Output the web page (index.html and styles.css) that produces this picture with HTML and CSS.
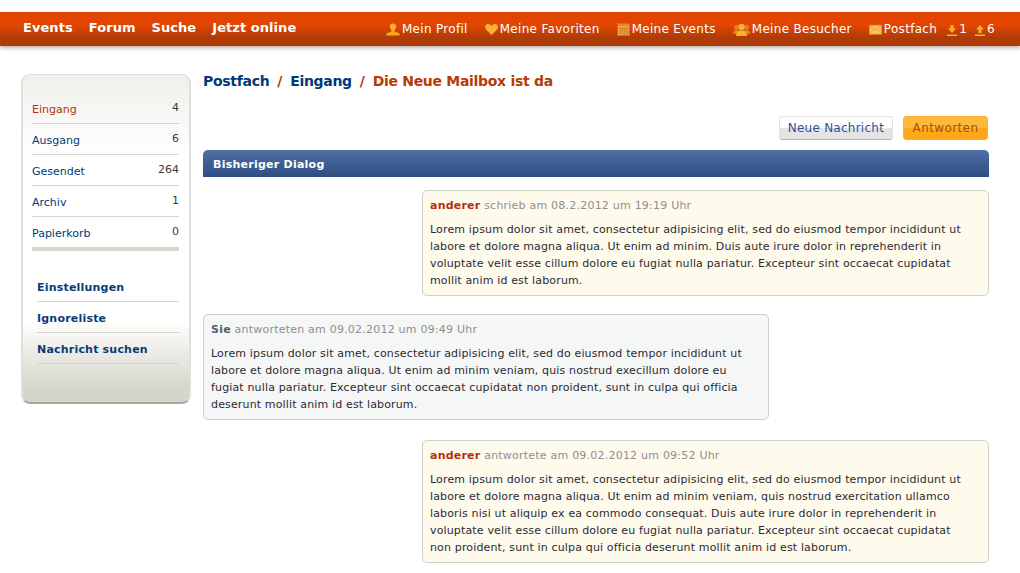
FILE: index.html
```html
<!DOCTYPE html>
<html lang="de">
<head>
    <meta charset="UTF-8">
    <title>Postfach - Die Neue Mailbox ist da</title>
    <link rel="stylesheet" href="styles.css">
</head>
<body>
    <div class="topbar">
        <div class="main-nav">
            <a>Events</a>
            <a>Forum</a>
            <a>Suche</a>
            <a>Jetzt online</a>
        </div>
        <div class="user-nav">
            <a><svg class="icon icon-profile" viewBox="0 0 14 14"><circle cx="7" cy="4" r="3.400" fill="#fbb034"/><path d="M5.500 6.500h3l.5 3 5 1.500v2.500H0V11l5-1.500z" fill="#f9a71f"/></svg>Mein Profil</a>
            <a><svg class="icon" viewBox="0 0 14 14"><path d="M7 13 1 7C-.5 5-.2 1.500 3 1.200 4.800 1 6.200 2 7 3.400 7.800 2 9.200 1 11 1.200 14.200 1.500 14.500 5 13 7z" fill="#fbb034"/></svg>Meine Favoriten</a>
            <a><svg class="icon" viewBox="0 0 14 14"><rect x=".5" y=".5" width="13" height="13" fill="#f9b04a" stroke="#c8701a"/><rect x="1" y="1" width="12" height="2.500" fill="#e8862a"/><path d="M1 6h12M1 8.500h12M1 11h12M3.500 4v9M6 4v9M8.500 4v9M11 4v9" stroke="#c8701a" stroke-width=".7"/></svg>Meine Events</a>
            <a><svg class="icon-people" viewBox="0 0 17 14"><circle cx="3.500" cy="4.500" r="2.400" fill="#d9861f"/><circle cx="13.500" cy="4.500" r="2.400" fill="#d9861f"/><path d="M0 11c0-2.500 1.200-4 3.500-4s3.500 1.500 3.500 4zM10 11c0-2.500 1.200-4 3.500-4s3.500 1.500 3.500 4z" fill="#d9861f"/><circle cx="8.500" cy="4" r="3.200" fill="#fbb034"/><path d="M3 13c0-3.500 2-5.500 5.500-5.500S14 9.500 14 13z" fill="#fbb034"/></svg>Meine Besucher</a>
            <a><svg class="icon" viewBox="0 0 14 14"><rect x=".5" y="2.500" width="13" height="9.500" fill="#fbc566" stroke="#e59a2c"/><path d="M1 3 7 7.500 13 3M1 11.500 5 6.500M13 11.500 9 6.500" fill="none" stroke="#e59a2c"/></svg>Postfach</a>
            <span class="counters">
                <a><svg class="icon-count" viewBox="0 0 10 11"><path d="M3.500 0h3v3.500H9L5 8 1 3.500h2.500zM0 9.500h10V11H0z" fill="#fbb034"/></svg>1</a>
                <a><svg class="icon-count" viewBox="0 0 10 11"><path d="M3.500 8h3V4.500H9L5 0 1 4.500h2.500zM0 9.500h10V11H0z" fill="#fbb034"/></svg>6</a>
            </span>
        </div>
    </div>

    <div class="page">
        <div class="sidebar">
            <ul class="folders">
                <li class="current"><a>Eingang</a><span>4</span></li>
                <li><a>Ausgang</a><span>6</span></li>
                <li><a>Gesendet</a><span>264</span></li>
                <li><a>Archiv</a><span>1</span></li>
                <li><a>Papierkorb</a><span>0</span></li>
            </ul>
            <ul class="tools">
                <li>Einstellungen</li>
                <li>Ignoreliste</li>
                <li>Nachricht suchen</li>
            </ul>
        </div>

        <div class="content">
            <h1 class="breadcrumb">
                <a>Postfach</a><i>/</i><a>Eingang</a><i>/</i><span>Die Neue Mailbox ist da</span>
            </h1>
            <div class="actions">
                <button class="btn btn-grey">Neue Nachricht</button>
                <button class="btn btn-orange">Antworten</button>
            </div>
            <div class="dialog-title">Bisheriger Dialog</div>

            <div class="message theirs first">
                <div class="meta"><b>anderer</b> schrieb am 08.2.2012 um 19:19 Uhr</div>
                <p>Lorem ipsum dolor sit amet, consectetur adipisicing elit, sed do eiusmod tempor incididunt ut labore et dolore magna aliqua. Ut enim ad minim. Duis aute irure dolor in reprehenderit in voluptate velit esse cillum dolore eu fugiat nulla pariatur. Excepteur sint occaecat cupidatat mollit anim id est laborum.</p>
            </div>
            <div class="message mine">
                <div class="meta"><b>Sie</b> antworteten am 09.02.2012 um 09:49 Uhr</div>
                <p>Lorem ipsum dolor sit amet, consectetur adipisicing elit, sed do eiusmod tempor incididunt ut labore et dolore magna aliqua. Ut enim ad minim veniam, quis nostrud execillum dolore eu fugiat nulla pariatur. Excepteur sint occaecat cupidatat non proident, sunt in culpa qui officia deserunt mollit anim id est laborum.</p>
            </div>
            <div class="message theirs">
                <div class="meta"><b>anderer</b> antwortete am 09.02.2012 um 09:52 Uhr</div>
                <p>Lorem ipsum dolor sit amet, consectetur adipisicing elit, sed do eiusmod tempor incididunt ut labore et dolore magna aliqua. Ut enim ad minim veniam, quis nostrud exercitation ullamco laboris nisi ut aliquip ex ea commodo consequat. Duis aute irure dolor in reprehenderit in voluptate velit esse cillum dolore eu fugiat nulla pariatur. Excepteur sint occaecat cupidatat non proident, sunt in culpa qui officia deserunt mollit anim id est laborum.</p>
            </div>
        </div>
    </div>
</body>
</html>
```

FILE: styles.css
```css
body {
    margin: 0;
    padding: 12px 0 0;
    background-color: #ffffff;
    color: #2b2b33;
    font-family: "DejaVu Sans", Verdana, sans-serif;
    font-size: 11px;
}
.topbar {
    display: flex;
    justify-content: space-between;
    height: 34px;
    padding: 0 25px 0 23px;
    background: linear-gradient(#e24500 0, #e24500 40%, #af3c06 75%, #af3c06 100%);
    box-shadow: 0 2px 4px rgba(90, 60, 40, 0.4);
    color: #ffffff;
}
.main-nav {
    display: flex;
    gap: 16px;
    padding-top: 8px;
    font-size: 13px;
    font-weight: bold;
    letter-spacing: 0.06px;
}
.user-nav {
    display: flex;
    gap: 17px;
    padding-top: 10px;
    font-size: 12px;
    letter-spacing: 0.3px;
}
.user-nav a {
    display: flex;
    align-items: flex-start;
}
.icon {
    width: 13px;
    height: 13px;
    margin: 1px 2px 0 0;
}
.icon-profile {
    width: 14px;
}
.icon-people {
    width: 17px;
    height: 14px;
    margin: 1px 2px 0 0;
}
.icon-count {
    width: 10px;
    height: 11px;
    margin: 3px 2px 0 0;
}
.counters {
    display: flex;
    gap: 8px;
    margin-left: -7px;
}
.page {
    display: flex;
    align-items: flex-start;
    gap: 12px;
    padding: 28px 31px 10px 21px;
}
.sidebar {
    flex: none;
    box-sizing: border-box;
    width: 170px;
    height: 330px;
    padding: 18px 10px 0 9px;
    border: 2px solid #e0dfdb;
    border-top-width: 1px;
    border-bottom-color: #a9a89f;
    border-radius: 9px;
    background: linear-gradient(#f0efeb 0, #ffffff 25%, #ffffff 75%, #d6d5ca 96%);
}
.folders, .tools {
    margin: 0;
    padding: 0;
    list-style: none;
}
.folders {
    border-bottom: 4px solid #d6d5ca;
}
.folders li {
    display: flex;
    justify-content: space-between;
    height: 30px;
    line-height: 33px;
    border-bottom: 1px solid #d6d5ca;
    color: #003a78;
}
.folders li:last-child {
    border-bottom: 0;
}
.folders li span {
    color: #3a3a3a;
    line-height: 30px;
}
.folders .current a {
    color: #b3300e;
}
.tools {
    margin: 20px 0 0 5px;
}
.tools li {
    height: 30px;
    line-height: 33px;
    border-bottom: 1px solid #d6d5ca;
    color: #0b3a78;
    font-weight: bold;
    letter-spacing: 0.2px;
}
.content {
    flex: 1;
    min-width: 0;
}
.breadcrumb {
    margin: 0;
    font-size: 14px;
    font-weight: bold;
    line-height: 14px;
    letter-spacing: -0.3px;
    color: #003a78;
}
.breadcrumb i {
    margin: 0 8px;
    font-style: normal;
    color: #b3300e;
}
.breadcrumb span {
    color: #b83a06;
}
.actions {
    display: flex;
    justify-content: flex-end;
    gap: 10px;
    margin-top: 28px;
    padding-right: 1px;
}
.btn {
    height: 24px;
    border-radius: 3px;
    font-family: inherit;
    font-size: 12px;
}
.btn-grey {
    padding: 0 8px;
    border: 1px solid #e2e2e2;
    border-bottom-color: #b5b5b5;
    background: linear-gradient(#ffffff 50%, #e4e4e4 50%);
    color: #2f4f94;
    letter-spacing: 0.25px;
}
.btn-orange {
    padding: 0 8.5px;
    border: 1px solid #fbb034;
    background: linear-gradient(#fdb93c 50%, #fba918 50%);
    color: #a8500c;
    letter-spacing: 0.4px;
}
.dialog-title {
    height: 27px;
    margin-top: 10px;
    padding-left: 10px;
    border-radius: 5px 5px 0 0;
    background: linear-gradient(#4d6fa6, #2f4d80);
    color: #ffffff;
    font-weight: bold;
    line-height: 29px;
    letter-spacing: 0.25px;
}
.message {
    box-sizing: border-box;
    width: 566px;
    margin-top: 18px;
    padding: 6px 14px 6px 7px;
    border: 1px solid #cfcfca;
    border-radius: 5px;
    line-height: 17px;
    letter-spacing: 0.15px;
}
.message p {
    margin: 7px 0 0;
}
.message.first {
    margin-top: 13px;
}
.mine + .theirs {
    margin-top: 20px;
}
.theirs {
    width: 567px;
    margin-left: auto;
    background-color: #fefaec;
}
.mine {
    background-color: #f5f6f6;
}
.meta {
    color: #8f8f8f;
    letter-spacing: 0.22px;
}
.theirs .meta b {
    color: #b3300e;
}
.mine .meta b {
    color: #4f6175;
}
```
